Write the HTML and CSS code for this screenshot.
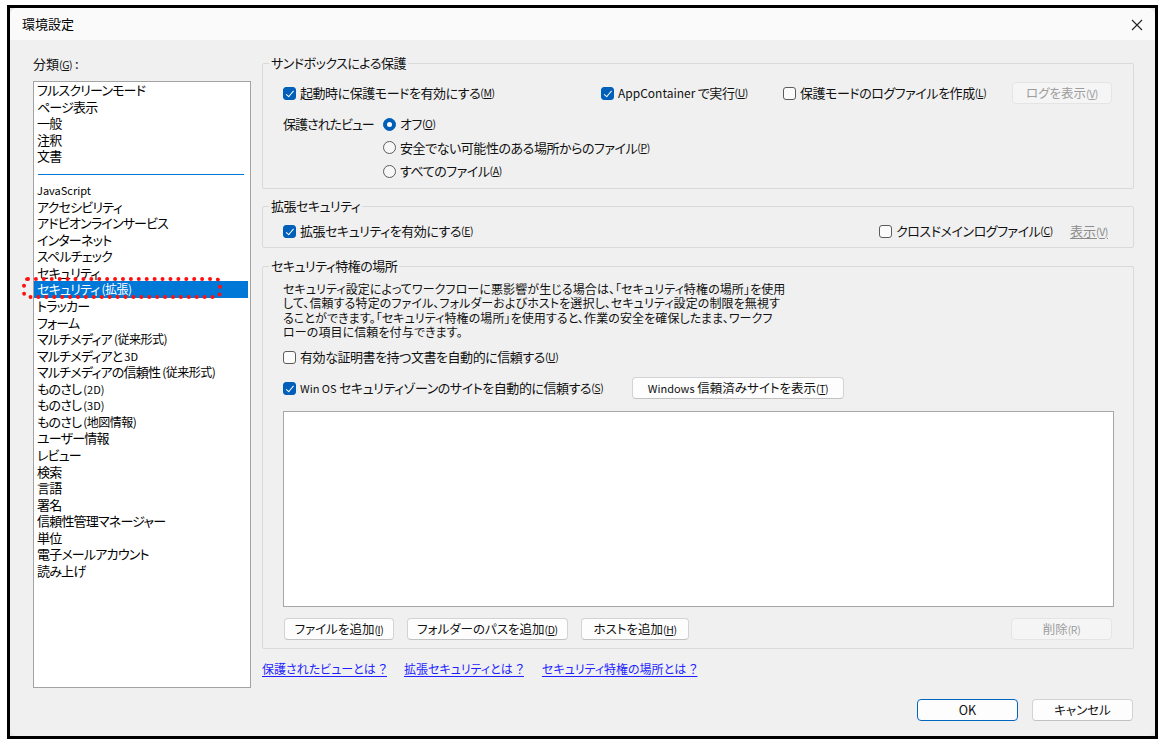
FILE: index.html
```html
<!DOCTYPE html>
<html lang="ja">
<head>
<meta charset="utf-8">
<title>環境設定</title>
<link rel="stylesheet" href="styles.css">
</head>
<body>
<div class="frame">
  <div class="dialog">
    <div class="titlebar">
      <span class="title">環境設定</span>
      <svg class="close" width="12" height="12" viewBox="0 0 12 12"><path d="M1 1 L11 11 M11 1 L1 11" stroke="#222" stroke-width="1.1" fill="none"/></svg>
    </div>
    <div class="content">
      <div class="left">
        <div class="cat-label">分類<span class="mn">(<u>G</u>)</span> :</div>
        <ul class="list">
          <li>フルスクリーンモード</li>
          <li>ページ表示</li>
          <li>一般</li>
          <li>注釈</li>
          <li>文書</li>
          <li class="sep"></li>
          <li class="latin">JavaScript</li>
          <li>アクセシビリティ</li>
          <li>アドビオンラインサービス</li>
          <li>インターネット</li>
          <li>スペルチェック</li>
          <li>セキュリティ</li>
          <li class="selected">セキュリティ <span class="paren">(拡張)</span></li>
          <li>トラッカー</li>
          <li>フォーム</li>
          <li>マルチメディア <span class="paren">(従来形式)</span></li>
          <li>マルチメディアと <span class="small">3D</span></li>
          <li>マルチメディアの信頼性 <span class="paren">(従来形式)</span></li>
          <li>ものさし <span class="small">(2D)</span></li>
          <li>ものさし <span class="small">(3D)</span></li>
          <li>ものさし <span class="paren">(地図情報)</span></li>
          <li>ユーザー情報</li>
          <li>レビュー</li>
          <li>検索</li>
          <li>言語</li>
          <li>署名</li>
          <li>信頼性管理マネージャー</li>
          <li>単位</li>
          <li>電子メールアカウント</li>
          <li>読み上げ</li>
        </ul>
      </div>
      <div class="right">
        <fieldset class="group g1">
          <legend>サンドボックスによる保護</legend>
          <div class="row row1">
            <label class="chk w1"><span class="cb on"></span>起動時に保護モードを有効にする<span class="mn">(<u>M</u>)</span></label>
            <label class="chk w2"><span class="cb on"></span><span class="latin-s">AppContainer</span>&nbsp;で実行<span class="mn">(<u>U</u>)</span></label>
            <label class="chk"><span class="cb"></span>保護モードのログファイルを作成<span class="mn">(<u>L</u>)</span></label>
            <button class="btn disabled w-log">ログを表示<span class="mn">(<u>V</u>)</span></button>
          </div>
          <div class="pv">
            <div class="pv-label">保護されたビュー</div>
            <div class="radios">
              <label class="chk rrow"><span class="rb on"></span>オフ<span class="mn">(<u>O</u>)</span></label>
              <label class="chk rrow"><span class="rb"></span>安全でない可能性のある場所からのファイル<span class="mn">(<u>P</u>)</span></label>
              <label class="chk rrow"><span class="rb"></span>すべてのファイル<span class="mn">(<u>A</u>)</span></label>
            </div>
          </div>
        </fieldset>

        <fieldset class="group g2">
          <legend>拡張セキュリティ</legend>
          <div class="row">
            <label class="chk"><span class="cb on"></span>拡張セキュリティを有効にする<span class="mn">(<u>E</u>)</span></label>
            <label class="chk cross"><span class="cb"></span>クロスドメインログファイル<span class="mn">(<u>C</u>)</span></label>
            <span class="dis-link">表示<span class="mn">(<u>V</u>)</span></span>
          </div>
        </fieldset>

        <fieldset class="group g3">
          <legend>セキュリティ特権の場所</legend>
          <p class="desc">セキュリティ設定によってワークフローに悪影響が生じる場合は、「セキュリティ特権の場所」を使用<br>して、信頼する特定のファイル、フォルダーおよびホストを選択し、セキュリティ設定の制限を無視す<br>ることができます。「セキュリティ特権の場所」を使用すると、作業の安全を確保したまま、ワークフ<br>ローの項目に信頼を付与できます。</p>
          <div class="row r-cert">
            <label class="chk"><span class="cb"></span>有効な証明書を持つ文書を自動的に信頼する<span class="mn">(<u>U</u>)</span></label>
          </div>
          <div class="row r-win">
            <label class="chk w-win"><span class="cb on"></span><span class="small">Win OS</span>&nbsp;セキュリティゾーンのサイトを自動的に信頼する<span class="mn">(<u>S</u>)</span></label>
            <button class="btn w-sites"><span class="small">Windows</span>&nbsp;信頼済みサイトを表示<span class="mn">(<u>T</u>)</span></button>
          </div>
          <div class="locations"></div>
          <div class="row r-btns">
            <button class="btn w-file">ファイルを追加<span class="mn">(<u>I</u>)</span></button>
            <button class="btn w-folder">フォルダーのパスを追加<span class="mn">(<u>D</u>)</span></button>
            <button class="btn w-host">ホストを追加<span class="mn">(<u>H</u>)</span></button>
            <button class="btn disabled w-del">削除<span class="mn">(R)</span></button>
          </div>
        </fieldset>

        <div class="links">
          <a href="#" class="l1">保護されたビューとは ？</a>
          <a href="#" class="l2">拡張セキュリティとは ？</a>
          <a href="#" class="l3">セキュリティ特権の場所とは ？</a>
        </div>
      </div>
    </div>
    <div class="footer">
      <button class="btn primary w-ok">OK</button>
      <button class="btn w-ok">キャンセル</button>
    </div>
  </div>
  <div class="highlight"></div>
</div>
</body>
</html>
```

FILE: styles.css
```css
* { box-sizing: border-box; }

html, body {
  margin: 0;
  padding: 0;
  background: #ffffff;
}

body {
  font-family: "Noto Sans CJK JP", "Noto Sans", sans-serif;
  font-size: 13px;
  font-feature-settings: "palt" 1;
  color: #111;
  width: 1167px;
  height: 746px;
  overflow: hidden;
}

.frame {
  position: relative;
  margin: 5px 0 0 7px;
  width: 1151px;
  height: 734px;
  border: 3px solid #000;
  background: #e9e9e9;
}

.dialog {
  width: 100%;
  height: 100%;
  background: #f0f0f0;
  border-radius: 7px;
  display: flex;
  flex-direction: column;
  overflow: hidden;
}

.titlebar {
  height: 32px;
  flex: none;
  background: #fafafa;
  display: flex;
  align-items: center;
  justify-content: space-between;
  padding: 0 12px 0 12px;
}

.title {
  font-size: 13px;
  line-height: 16px;
  color: #000;
}

.close { display: block; margin-top: 1px; }

.content {
  flex: none;
  display: grid;
  grid-template-columns: 218px 872px;
  column-gap: 11px;
  padding: 15px 0 0 23px;
  align-items: start;
}

.mn {
  font-size: 10.5px;
  letter-spacing: -0.4px;
  font-feature-settings: normal;
}
.mn u { text-underline-offset: 1px; }

.cat-label {
  line-height: 16px;
  height: 16px;
  margin-top: 1px;
}

.list {
  list-style: none;
  margin: 9px 0 0 0;
  padding: 0 2px 0 0;
  height: 607px;
  background: #fff;
  border: 1px solid #a3a3a3;
}

.list li {
  height: 16.57px;
  line-height: 16.57px;
  padding-left: 3px;
  white-space: nowrap;
  color: #000;
  letter-spacing: -0.8px;
}

.list li.sep {
  height: 17.2px;
  padding: 9px 4px 0 4px;
}
.list li.sep::after {
  content: "";
  display: block;
  border-top: 1px solid #0078d7;
}

.list li.latin {
  font-size: 11px;
  letter-spacing: 0;
}

.list li.selected {
  background: #0078d7;
  color: #fff;
}

.paren { font-size: 12px; letter-spacing: -0.5px; }
.small { font-size: 11px; letter-spacing: 0; }
.latin-s { font-size: 12px; letter-spacing: 0; }

/* group boxes */
.group {
  margin: 0;
  border: 1px solid #d9d9d9;
  border-radius: 2px;
  padding: 0 21px 0 20px;
  min-width: 0;
}
.group legend {
  padding: 0 2px;
  margin-left: -14px;
  line-height: 16px;
  font-size: 13px;
  color: #111;
  letter-spacing: -0.5px;
}

.g1 { padding-top: 11px; padding-bottom: 7px; }
.g2 { margin-top: 9px; padding-top: 7px; padding-bottom: 6px; }
.g3 { margin-top: 10px; padding-top: 8px; padding-bottom: 8px; padding-right: 19px; }

.row {
  display: flex;
  align-items: center;
}

.row1 { height: 22px; }
.g2 .row { height: 20px; }

.chk {
  display: inline-flex;
  align-items: center;
  white-space: nowrap;
  line-height: 16px;
  color: #111;
  letter-spacing: -0.45px;
}

.w1 { width: 318px; }
.w2 { width: 182px; }

.cb {
  width: 13px;
  height: 13px;
  border-radius: 3px;
  border: 1px solid #5c5c5c;
  background: #fbfbfb;
  margin-right: 4px;
  flex: none;
  position: relative;
}
.cb.on {
  background: #005fb8;
  border-color: #005fb8;
}
.cb.on::after {
  content: "";
  position: absolute;
  left: 3.5px;
  top: 1px;
  width: 3px;
  height: 6.5px;
  border: solid #fff;
  border-width: 0 1.3px 1.3px 0;
  transform: rotate(40deg);
}

.rb {
  width: 13px;
  height: 13px;
  border-radius: 50%;
  border: 1px solid #5c5c5c;
  background: #f7f7f7;
  margin-right: 4px;
  flex: none;
  position: relative;
}
.rb.on {
  background: #005fb8;
  border-color: #005fb8;
}
.rb.on::after {
  content: "";
  position: absolute;
  left: 3px;
  top: 3px;
  width: 5px;
  height: 5px;
  border-radius: 50%;
  background: #fff;
}

.btn {
  font-family: inherit;
  font-size: 12.5px;
  font-feature-settings: "palt" 1;
  height: 22px;
  line-height: 18px;
  padding: 0 6px;
  background: #fdfdfd;
  border: 1px solid #d3d3d3;
  border-bottom-color: #c2c2c2;
  border-radius: 4px;
  color: #111;
  white-space: nowrap;
  flex: none;
}
.btn.disabled {
  background: #f5f5f5;
  border-color: #e4e4e4;
  color: #9d9d9d;
}
.btn.primary {
  border: 1px solid #0067c0;
}

.w-log { width: 100px; margin-left: auto; }

.pv {
  display: flex;
  margin-top: 10px;
}
.pv-label {
  width: 100px;
  line-height: 20px;
  height: 20px;
  letter-spacing: -1px;
}
.radios {
  display: flex;
  flex-direction: column;
  gap: 3.5px;
}
.rrow { height: 20px; }

.cross { margin-left: auto; width: 191px; }
.dis-link {
  color: #8c8c8c;
  text-decoration: underline;
  text-underline-offset: 2px;
  margin-right: 4px;
  line-height: 16px;
}
.dis-link .mn u { text-decoration: none; }

.desc {
  margin: 0;
  font-size: 12px;
  line-height: 14.3px;
  white-space: nowrap;
  color: #111;
  letter-spacing: 0.1px;
}

.r-cert { margin-top: 8px; height: 20px; }
.r-win { margin-top: 10px; height: 22px; }
.w-win { width: 349px; }
.w-sites { width: 212px; }

.locations {
  margin-top: 12px;
  height: 196px;
  background: #fff;
  border: 1px solid #a6a6a6;
}

.r-btns { margin-top: 11px; height: 22px; padding-left: 1px; }
.w-file { width: 110px; }
.w-folder { width: 161px; margin-left: 13px; }
.w-host { width: 108px; margin-left: 13px; }
.w-del { width: 101px; margin-left: auto; margin-right: 2px; }

.links {
  margin-top: 12px;
  line-height: 16px;
  display: flex;
  font-size: 12px;
}
.links a {
  color: #1f1fff;
  text-decoration: underline;
  text-underline-offset: 2px;
  white-space: nowrap;
}
.l2 { margin-left: 17px; }
.l3 { margin-left: 18px; }

.footer {
  display: flex;
  justify-content: flex-end;
  gap: 14px;
  padding: 11px 22px 0 0;
}
.w-ok { width: 101px; }

.highlight {
  position: absolute;
  left: 12px;
  top: 269px;
  width: 200px;
  height: 22px;
  border: 4px dotted #ff1010;
  border-radius: 6px;
  pointer-events: none;
}
```
